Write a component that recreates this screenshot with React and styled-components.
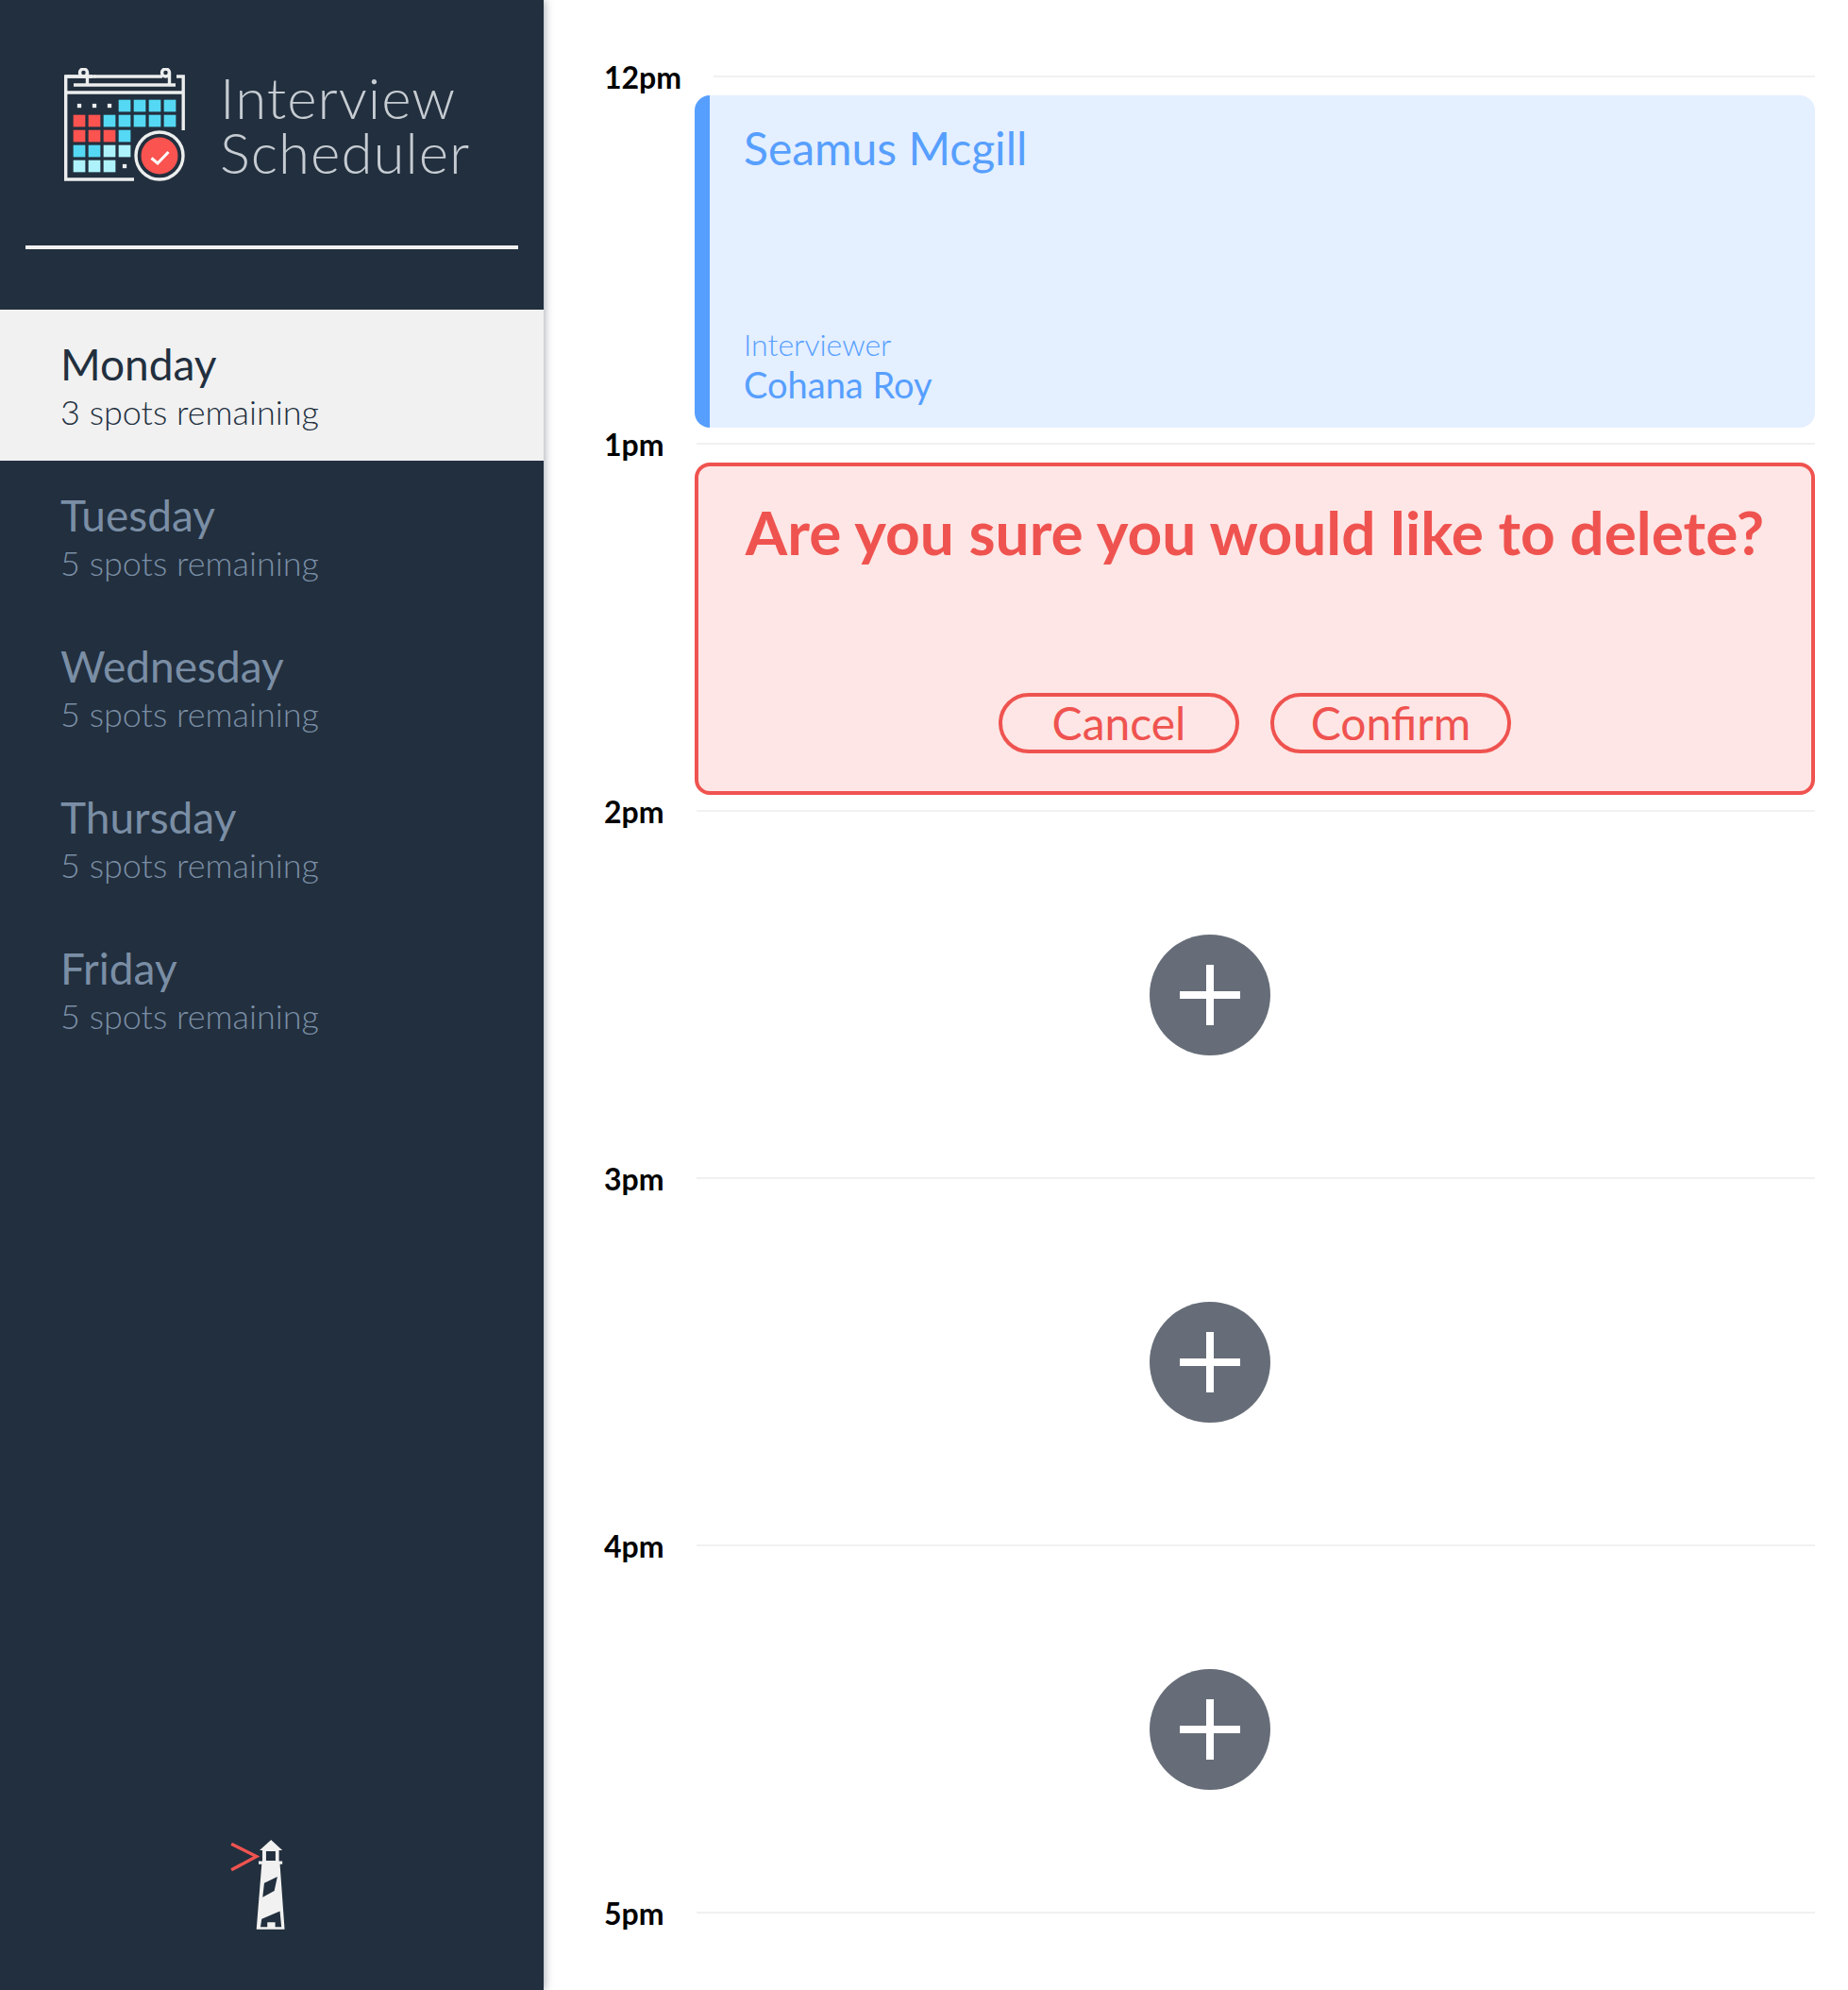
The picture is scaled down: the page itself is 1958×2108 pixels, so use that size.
import React from 'react'
import styled, { createGlobalStyle } from 'styled-components'

const GlobalStyle = createGlobalStyle`
  html, body {
    margin: 0;
    padding: 0;
    background: #fff;
    font-family: Lato, "Noto Sans", sans-serif;
  }
  * { box-sizing: border-box; }
`

const Layout = styled.div`
  display: flex;
  height: 100vh;
  overflow: hidden;
`

const Sidebar = styled.aside`
  width: 576px;
  flex: none;
  display: flex;
  flex-direction: column;
  background: #222f3e;
  box-shadow: 2px 0 8px rgba(34, 47, 62, 0.35);
  position: relative;
`

const Brand = styled.div`
  display: flex;
  align-items: center;
  gap: 37px;
  height: 120px;
  margin: 72px 0 0 68px;
`

const BrandName = styled.div`
  font-weight: 300;
  font-size: 60px;
  line-height: 58px;
  letter-spacing: 1px;
  color: #c6ccd2;
`

const Divider = styled.hr`
  height: 4px;
  margin: 68px 27px 64px;
  border: 0;
  background: #f1f1f1;
`

const Nav = styled.nav`
  display: flex;
  flex-direction: column;
`

const Day = styled.div`
  height: 160px;
  padding: 30px 0 0 64px;
  background: ${p => (p.$active ? '#f1f1f1' : 'transparent')};
  color: ${p => (p.$active ? '#222f3e' : '#7a8ea5')};
`

const DayName = styled.div`
  font-size: 46px;
  line-height: 56px;
`

const Spots = styled.div`
  font-size: 36px;
  font-weight: 300;
  line-height: 44px;
`

const Footer = styled.div`
  margin-top: auto;
  padding: 0 30px 64px 0;
  display: flex;
  justify-content: center;
`

const Main = styled.main`
  flex: 1;
  padding: 64px 35px 0 64px;
`

const Slot = styled.section`
  height: 389px;
  display: flex;
  flex-direction: column;
`

const TimeRow = styled.div`
  display: flex;
  align-items: center;
  gap: 34px;
  height: 34px;
  flex: none;
`

const Time = styled.h4`
  margin: 0;
  font-size: 32px;
  font-weight: 700;
  color: #000;
`

const Line = styled.hr`
  flex: 1;
  height: 2px;
  margin: 0;
  border: 0;
  background: #f1f1f1;
`

const Booked = styled.article`
  height: 352px;
  margin: 3px 0 0 96px;
  padding: 24px 20px 24px 36px;
  display: flex;
  flex-direction: column;
  background: #e4efff;
  border-left: 16px solid #579fff;
  border-radius: 16px;
  color: #579fff;
`

const Student = styled.h2`
  margin: 0;
  font-size: 48px;
  font-weight: 400;
  line-height: 64px;
`

const Interviewer = styled.div`
  margin-top: auto;
`

const InterviewerLabel = styled.div`
  font-size: 32px;
  font-weight: 300;
  line-height: 40px;
`

const InterviewerName = styled.div`
  font-size: 38px;
  line-height: 44px;
`

const Confirm = styled.article`
  height: 352px;
  margin: 3px 0 0 96px;
  padding: 30px 20px 40px;
  display: flex;
  flex-direction: column;
  align-items: center;
  background: #fde6e5;
  border: 4px solid #ef5350;
  border-radius: 16px;
  color: #ef5350;
`

const Question = styled.h1`
  margin: 0;
  font-size: 64px;
  font-weight: 700;
  line-height: 80px;
`

const Actions = styled.div`
  margin-top: auto;
  display: flex;
  gap: 33px;
`

const Pill = styled.button`
  width: 255px;
  height: 64px;
  padding: 0;
  font-family: inherit;
  font-size: 48px;
  line-height: 56px;
  color: #ef5350;
  background: transparent;
  border: 4px solid #ef5350;
  border-radius: 32px;
`

const Empty = styled.div`
  flex: 1;
  display: flex;
  align-items: center;
  justify-content: center;
`

const AddButton = styled.button`
  width: 128px;
  height: 128px;
  padding: 0;
  display: flex;
  align-items: center;
  justify-content: center;
  background: #666d78;
  border: 0;
  border-radius: 50%;
`

const cellX = i => 9.67 + i * 16
const cellY = i => 33.67 + i * 16

const CYAN = '#55d8f3'
const RED = '#fb5350'
const PALE = '#aef3fb'

const cells = [
  [3, 0, CYAN], [4, 0, CYAN], [5, 0, CYAN], [6, 0, CYAN],
  [0, 1, RED], [1, 1, RED], [2, 1, CYAN], [3, 1, CYAN], [4, 1, CYAN], [5, 1, CYAN], [6, 1, CYAN],
  [0, 2, RED], [1, 2, RED], [2, 2, RED], [3, 2, CYAN],
  [0, 3, CYAN], [1, 3, CYAN], [2, 3, PALE], [3, 3, PALE],
  [0, 4, PALE], [1, 4, PALE], [2, 4, PALE],
]

const dots = [[0, 0], [1, 0], [2, 0], [3, 4]]

function CalendarLogo() {
  return (
    <svg width="128" height="120" viewBox="0 0 128 120" fill="none">
      <g stroke="#eceeee" strokeWidth="3.4">
        <path d="M33 9H1.7V118H74" />
        <path d="M30 9H1.7" />
        <path d="M30 9H102" transform="translate(2 0)" />
        <path d="M119 9H126.2V66" />
        <path d="M1.7 26H126.2" />
        <path d="M10 18H118" />
        <circle cx="20.5" cy="5" r="4" />
        <circle cx="107.5" cy="5" r="4" />
        <path d="M24.5 5V18M111.5 5V18" />
        <circle cx="101" cy="93" r="25" />
      </g>
      {cells.map(([x, y, c]) => (
        <rect key={`${x}-${y}`} x={cellX(x)} y={cellY(y)} width="12.7" height="12.7" fill={c} />
      ))}
      {dots.map(([x, y]) => (
        <rect key={`${x}-${y}`} x={cellX(x) + 4.2} y={cellY(y) + 4.2} width="4.3" height="4.3" fill="#eceeee" />
      ))}
      <circle cx="101" cy="93" r="19.5" fill={RED} />
      <path d="M92.5 95.5L99 101L110.5 89" stroke="#fff" strokeWidth="3" />
    </svg>
  )
}

function Lighthouse() {
  return (
    <svg width="58" height="95" viewBox="0 0 58 95.5">
      <path d="M1 4.3L27.7 17.7L1 32" fill="none" stroke="#ef5350" strokeWidth="3.4" />
      <path d="M43.3 0L55.3 11H51.7V22.7H55.3V26H52.7L57.7 95.3H27.7L33.3 26H30V22.7H34V11H31Z" fill="#f1f1f1" />
      <path d="M38 12H48V22H38ZM36 46L50 39.3L46.7 54.3L34.3 61ZM33.3 84.3L52.7 76L54.3 92.7H47.7V87.7H39.3V92.7H32Z" fill="#222f3e" />
    </svg>
  )
}

const days = [
  { name: 'Monday', spots: 3, active: true },
  { name: 'Tuesday', spots: 5 },
  { name: 'Wednesday', spots: 5 },
  { name: 'Thursday', spots: 5 },
  { name: 'Friday', spots: 5 },
]

function AddSlot() {
  return (
    <Empty>
      <AddButton aria-label="Add">
        <svg width="64" height="64" viewBox="0 0 64 64">
          <path d="M0 32H64M32 0V64" stroke="#fff" strokeWidth="8" />
        </svg>
      </AddButton>
    </Empty>
  )
}

export default function App() {
  return (
    <Layout>
      <GlobalStyle />
      <Sidebar>
        <Brand>
          <CalendarLogo />
          <BrandName>Interview<br />Scheduler</BrandName>
        </Brand>
        <Divider />
        <Nav>
          {days.map(d => (
            <Day key={d.name} $active={d.active}>
              <DayName>{d.name}</DayName>
              <Spots>{d.spots} spots remaining</Spots>
            </Day>
          ))}
        </Nav>
        <Footer>
          <Lighthouse />
        </Footer>
      </Sidebar>
      <Main>
        <Slot>
          <TimeRow><Time>12pm</Time><Line /></TimeRow>
          <Booked>
            <Student>Seamus Mcgill</Student>
            <Interviewer>
              <InterviewerLabel>Interviewer</InterviewerLabel>
              <InterviewerName>Cohana Roy</InterviewerName>
            </Interviewer>
          </Booked>
        </Slot>
        <Slot>
          <TimeRow><Time>1pm</Time><Line /></TimeRow>
          <Confirm>
            <Question>Are you sure you would like to delete?</Question>
            <Actions>
              <Pill>Cancel</Pill>
              <Pill>Confirm</Pill>
            </Actions>
          </Confirm>
        </Slot>
        {['2pm', '3pm', '4pm'].map(t => (
          <Slot key={t}>
            <TimeRow><Time>{t}</Time><Line /></TimeRow>
            <AddSlot />
          </Slot>
        ))}
        <Slot>
          <TimeRow><Time>5pm</Time><Line /></TimeRow>
        </Slot>
      </Main>
    </Layout>
  )
}
